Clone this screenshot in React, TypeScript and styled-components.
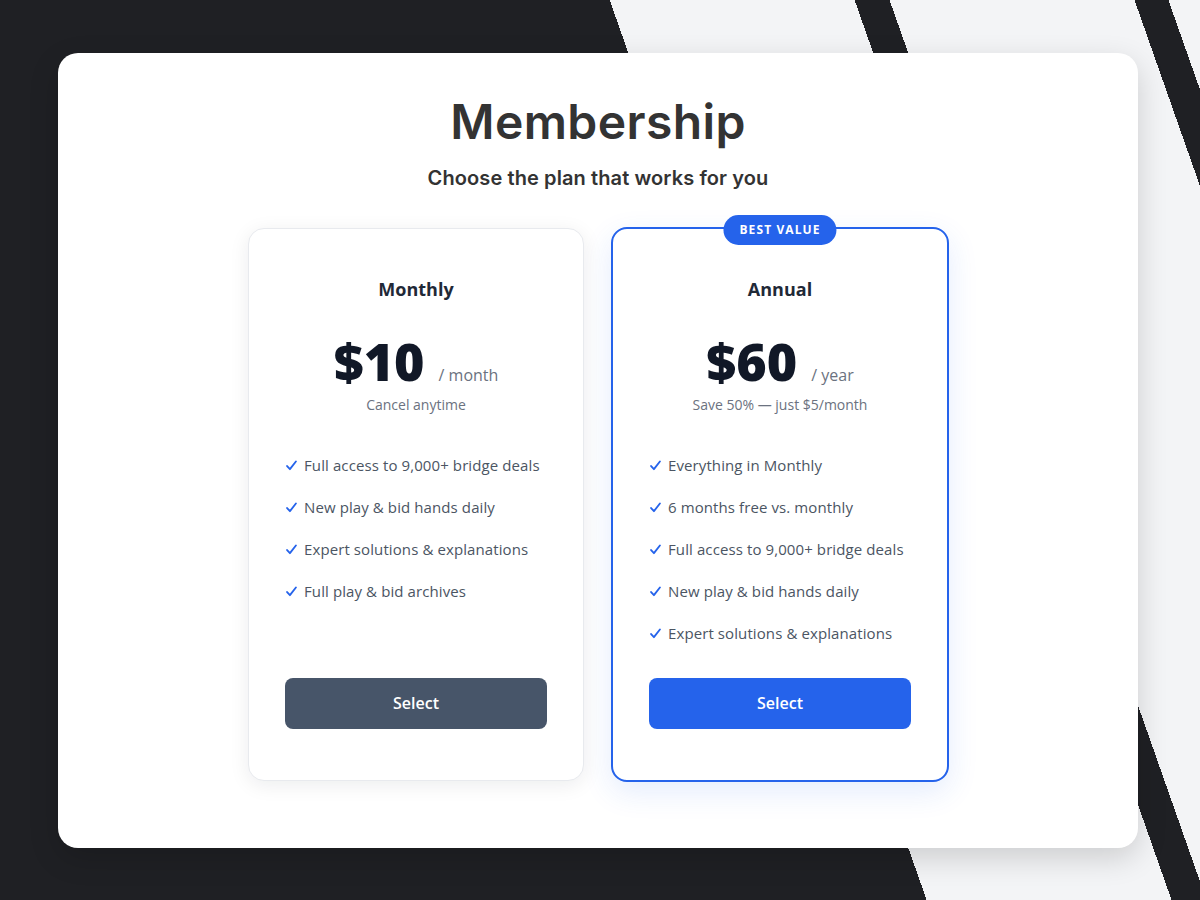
import React from "react";
import styled, {createGlobalStyle} from "styled-components";

type Plan = {
    name: string
    price: string
    period: string
    note: string
    features: string[]
    featured?: boolean
}

const plans: Plan[] = [
    {
        name: "Monthly",
        price: "$10",
        period: "/ month",
        note: "Cancel anytime",
        features: [
            "Full access to 9,000+ bridge deals",
            "New play & bid hands daily",
            "Expert solutions & explanations",
            "Full play & bid archives",
        ],
    },
    {
        name: "Annual",
        price: "$60",
        period: "/ year",
        note: "Save 50% \u2014 just $5/month",
        features: [
            "Everything in Monthly",
            "6 months free vs. monthly",
            "Full access to 9,000+ bridge deals",
            "New play & bid hands daily",
            "Expert solutions & explanations",
        ],
        featured: true,
    },
]

const Tick = () => (
    <CheckIcon viewBox="0 0 12 12" aria-hidden>
        <path d="M1.2 6.6 L4.3 10 L10.8 1.6" fill="none" stroke="#2563eb"
              strokeWidth="2" strokeLinecap="round" strokeLinejoin="round"/>
    </CheckIcon>
)

const App: React.FC = function () {
    return (
        <Page>
            <GlobalStyle/>
            <Modal>
                <Title>Membership</Title>
                <Subtitle>Choose the plan that works for you</Subtitle>
                <Plans>
                    {plans.map(plan => (
                        <Card key={plan.name} $featured={plan.featured}>
                            {plan.featured && <Badge>BEST VALUE</Badge>}
                            <PlanName>{plan.name}</PlanName>
                            <PriceRow>
                                <Price>{plan.price}</Price>
                                <Period>{plan.period}</Period>
                            </PriceRow>
                            <Note>{plan.note}</Note>
                            <Features>
                                {plan.features.map(f => (
                                    <Feature key={f}>
                                        <Tick/>
                                        {f}
                                    </Feature>
                                ))}
                            </Features>
                            <SelectButton $featured={plan.featured}>Select</SelectButton>
                        </Card>
                    ))}
                </Plans>
            </Modal>
        </Page>
    )
}

export default App

const GlobalStyle = createGlobalStyle`
    html, body {
        margin: 0;
        padding: 0;
    }
    body {
        font-family: "Open Sans", "Liberation Sans", sans-serif;
    }
    * {
        box-sizing: border-box;
    }
`

// dark backdrop crossed by slanted light bands
const Page = styled.div`
    width: 100%;
    height: 100vh;
    overflow: hidden;
    padding: 53px 0 0 58px;
    background: linear-gradient(70.6deg,
        #1f2024 0px, #1f2024 874px,
        #f3f4f6 874px, #f3f4f6 1105px,
        #1f2024 1105px, #1f2024 1138px,
        #f3f4f6 1138px, #f3f4f6 1369px,
        #1f2024 1369px, #1f2024 1401px,
        #f3f4f6 1401px);
`
const Modal = styled.div`
    width: 1080px;
    height: 795px;
    background: #FFFFFF;
    border-radius: 20px;
    box-shadow: 0 10px 30px rgba(0, 0, 0, 0.16);
    display: flex;
    flex-direction: column;
    align-items: center;
    padding-top: 41px;
`
const Title = styled.h1`
    margin: 0;
    font-family: Inter, "Liberation Sans", sans-serif;
    font-size: 48px;
    line-height: 56px;
    font-weight: 600;
    color: #333333;
    letter-spacing: 0.4px;
`
const Subtitle = styled.h2`
    margin: 15px 0 0;
    font-family: Inter, "Liberation Sans", sans-serif;
    font-size: 20px;
    line-height: 26px;
    font-weight: 600;
    color: #333333;
    letter-spacing: 0.1px;
`
const Plans = styled.div`
    display: flex;
    gap: 26px;
    margin-top: 36px;
`
const Card = styled.div<{ $featured?: boolean }>`
    position: relative;
    width: ${p => p.$featured ? 338 : 336}px;
    margin: ${p => p.$featured ? 0 : 1}px;
    display: flex;
    flex-direction: column;
    align-items: center;
    padding: 48px 36px 51px;
    background: #FFFFFF;
    border-radius: 16px;
    border: ${p => p.$featured ? "2px solid #2563eb" : "1px solid #e8eaee"};
    box-shadow: ${p => p.$featured
        ? "0 10px 30px rgba(37, 99, 235, 0.12)"
        : "0 4px 20px rgba(15, 23, 42, 0.08)"};
`
const Badge = styled.div`
    position: absolute;
    top: -14px;
    left: 50%;
    transform: translateX(-50%);
    height: 30px;
    padding: 0 16px;
    border-radius: 15px;
    background: #2563eb;
    color: #FFFFFF;
    font-size: 12px;
    font-weight: 700;
    letter-spacing: 1.1px;
    line-height: 30px;
    white-space: nowrap;
`
const PlanName = styled.h3`
    margin: 0;
    font-size: 18px;
    line-height: 24px;
    font-weight: 700;
    color: #1f2937;
`
const PriceRow = styled.div`
    display: flex;
    align-items: baseline;
    gap: 14px;
    margin-top: 32px;
`
const Price = styled.span`
    font-size: 52px;
    line-height: 56px;
    font-weight: 800;
    color: #111827;
`
const Period = styled.span`
    font-size: 16px;
    line-height: 22px;
    color: #6b7280;
`
const Note = styled.div`
    margin-top: 6px;
    font-size: 14px;
    line-height: 20px;
    color: #6b7280;
`
const Features = styled.ul`
    align-self: stretch;
    list-style: none;
    margin: 39px 0 34px;
    padding: 0;
    display: flex;
    flex-direction: column;
    gap: 20px;
`
const Feature = styled.li`
    display: flex;
    align-items: center;
    gap: 7px;
    font-size: 15px;
    line-height: 22px;
    color: #4b5563;
    letter-spacing: 0.1px;
`
const CheckIcon = styled.svg`
    width: 11px;
    height: 11px;
    flex-shrink: 0;
    margin-left: 1px;
`
const SelectButton = styled.button<{ $featured?: boolean }>`
    margin-top: auto;
    align-self: stretch;
    height: 51px;
    border: none;
    border-radius: 8px;
    background: ${p => p.$featured ? "#2563eb" : "#475569"};
    color: #FFFFFF;
    font-family: "Open Sans", "Liberation Sans", sans-serif;
    font-size: 16px;
    line-height: 22px;
    font-weight: 600;
    padding: 0 0 2px;
    cursor: pointer;
`
